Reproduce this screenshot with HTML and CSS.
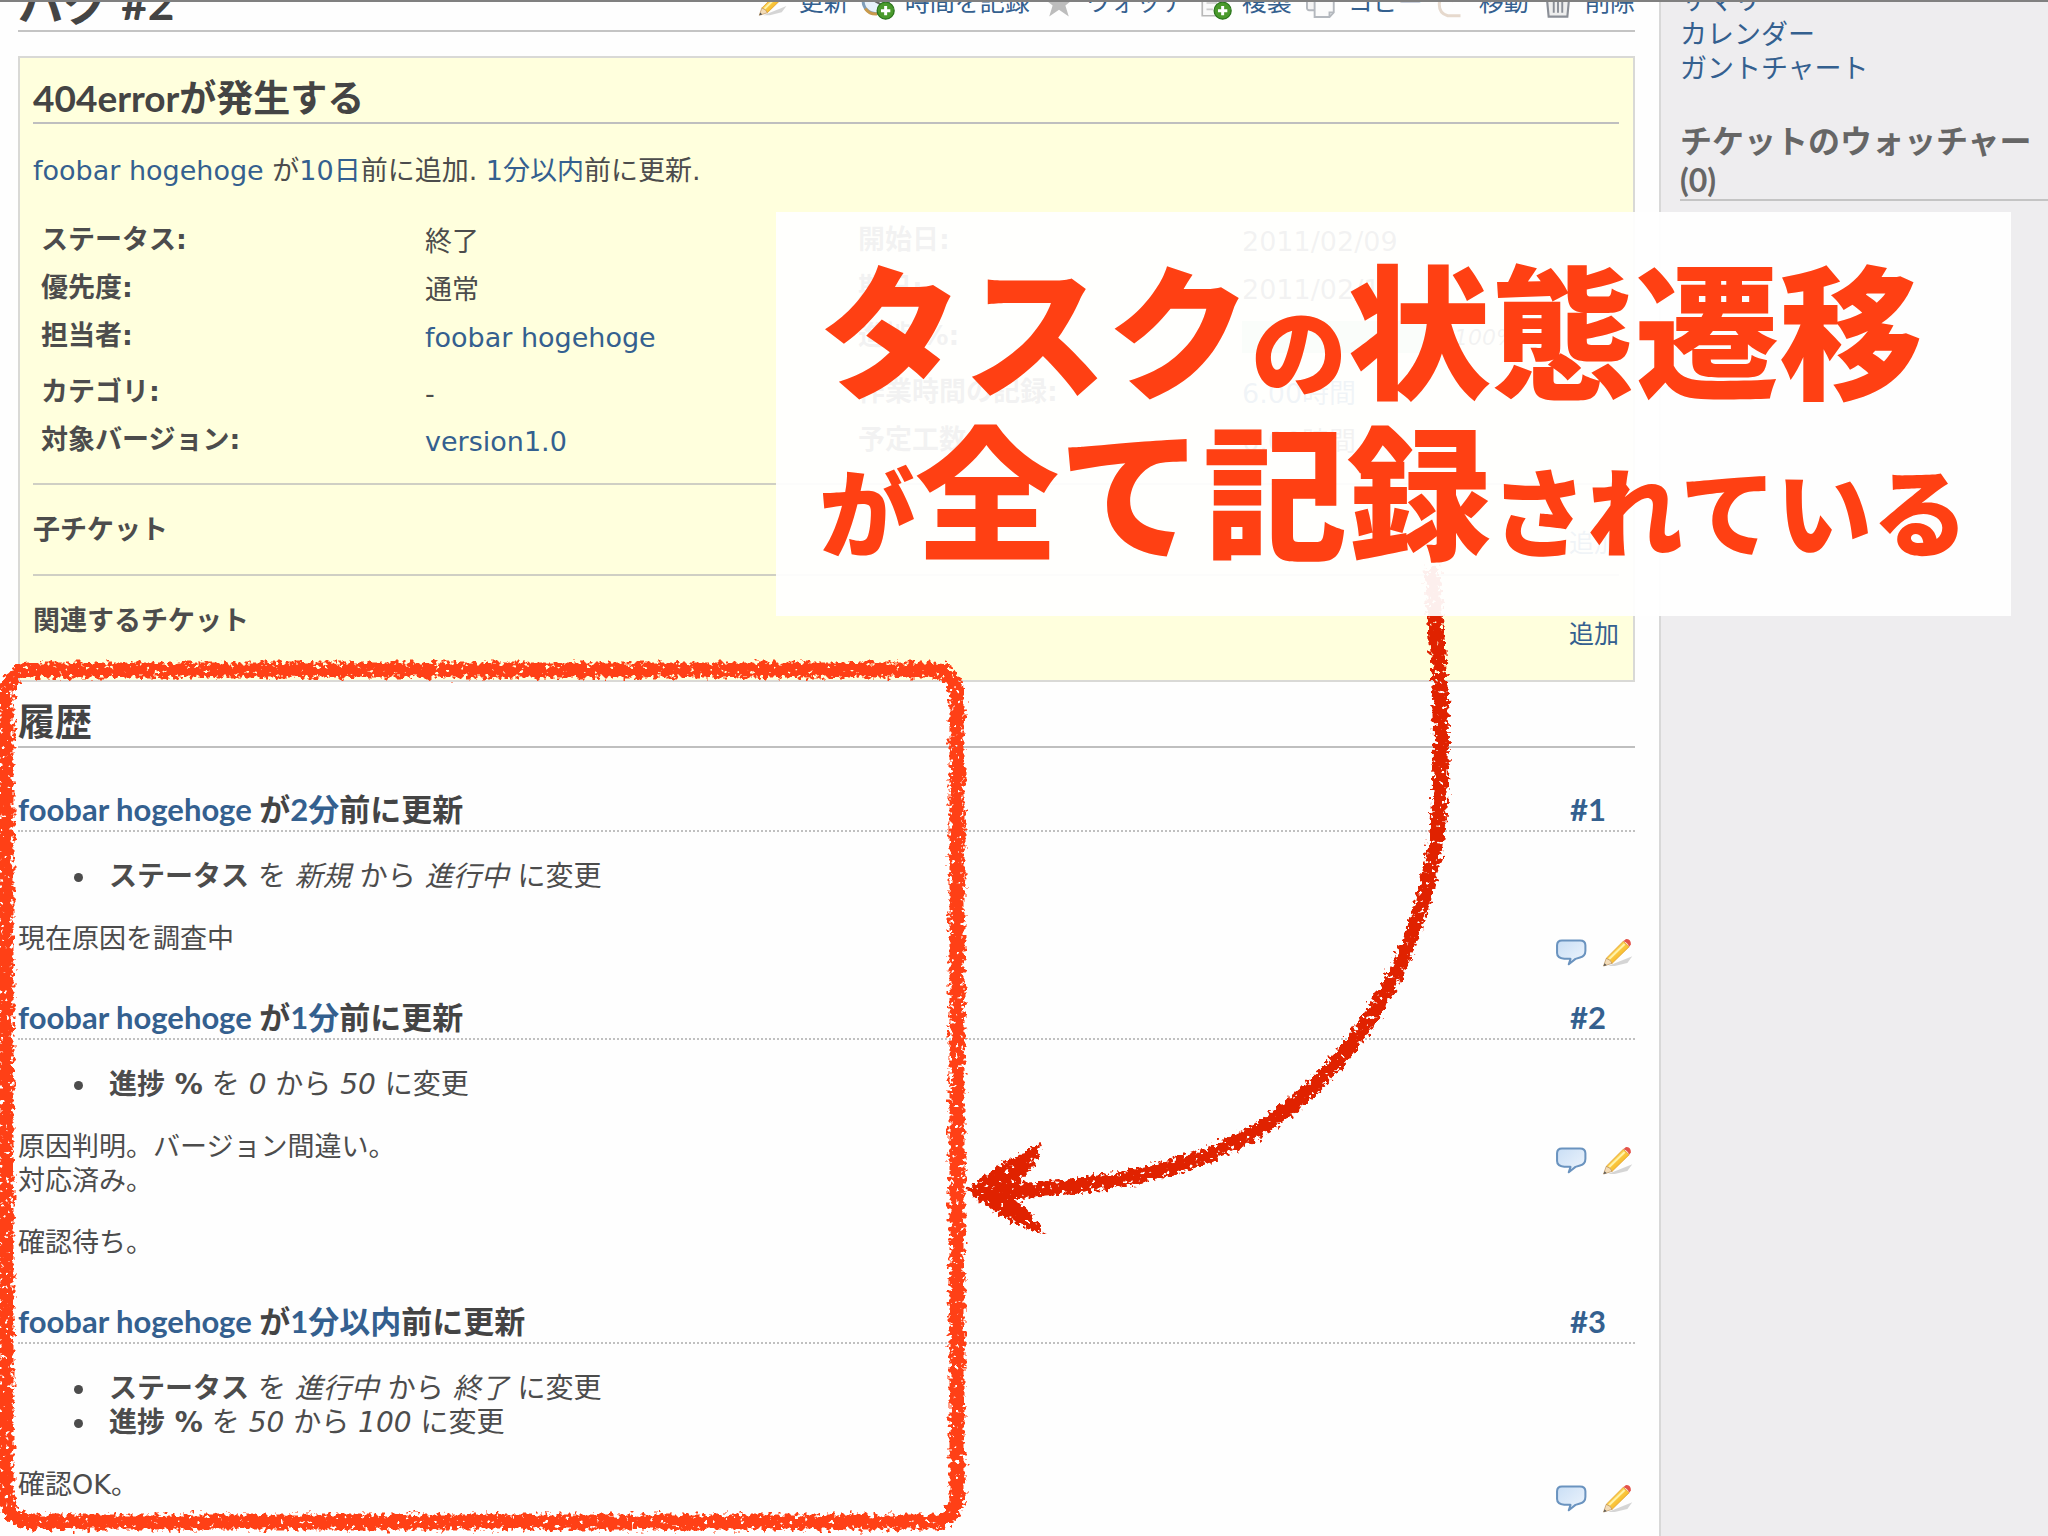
FILE: index.html
```html
<!DOCTYPE html>
<html lang="ja">
    <head>
        <meta charset="UTF-8">
        <title>バグ #2</title>
        <link rel="stylesheet" href="styles.css">
    </head>
    <body>
        <svg class="defs" width="0" height="0" aria-hidden="true">
            <linearGradient id="pen-body" x1="0" y1="0" x2="1" y2="1">
                <stop offset="0" stop-color="#ffe680"/>
                <stop offset="1" stop-color="#f5a800"/>
            </linearGradient>
            <linearGradient id="bubble-fill" x1="0" y1="0" x2="1" y2="1">
                <stop offset="0" stop-color="#c9def5"/>
                <stop offset="1" stop-color="#eef5fd"/>
            </linearGradient>
            <symbol id="pencil" viewBox="0 0 16 16">
                <path d="M4 13.8L14.8 9.4L12.6 12.4L7 13.8z" fill="#000" opacity=".16"/>
                <path d="M3.2 10.4L10.8 2.8L13.4 5.2L5.8 12.6z" fill="url(#pen-body)" stroke="#e3a32c" stroke-width=".4"/>
                <path d="M4.4 10.8L11.4 4" stroke="#fff3a8" stroke-width=".9"/>
                <path d="M10.8 2.8L12 1.8Q14.2 1.8 14.2 4.2L13.4 5.2Q12.8 3.4 10.8 2.8z" fill="#e4534a"/>
                <path d="M3.2 10.4L2 13.8L5.8 12.6Q5.2 10.8 3.2 10.4z" fill="#f3dcb8" stroke="#b98d55" stroke-width=".3"/>
                <path d="M2.5 12.5L2 13.8L3.4 13.4z" fill="#555"/>
            </symbol>
            <symbol id="bubble" viewBox="0 0 16 16">
                <path d="M4 2.4H12Q14.4 2.4 14.4 4.6V7Q14.4 9.4 12 10L10 10.6L7 13L7.8 10.6H5Q1.8 10.2 1.8 8V4.6Q1.8 2.4 4 2.4z" fill="url(#bubble-fill)" stroke="#6a93bf" stroke-width=".9" stroke-linejoin="round"/>
            </symbol>
            <symbol id="plus" viewBox="0 0 16 16">
                <circle cx="11.6" cy="11.6" r="4" fill="#4a9a2c" stroke="#2a741b" stroke-width=".6"/>
                <path d="M11.6 9.4V13.8M9.4 11.6H13.8" stroke="#fff" stroke-width="1.4"/>
            </symbol>
            <symbol id="clock" viewBox="0 0 16 16">
                <circle cx="7" cy="7" r="6" fill="#e8f1fa" stroke="#7f9db9" stroke-width="1.4"/>
                <path d="M2 10.6Q4 13.4 7.6 13.2" fill="none" stroke="#c99a4c" stroke-width="1.4"/>
                <path d="M7 3V7.4L10 9" fill="none" stroke="#666" stroke-width="1"/>
                <use href="#plus"/>
            </symbol>
            <symbol id="star" viewBox="0 0 16 16">
                <path d="M8 1L10 6H15L11 9.2L12.6 14.4L8 11.2L3.4 14.4L5 9.2L1 6H6z" fill="#bdbdbd"/>
            </symbol>
            <symbol id="duplicate" viewBox="0 0 16 16">
                <path d="M2 1H12V14H2z" fill="#fafafa" stroke="#b8b8b8" stroke-width=".8"/>
                <path d="M4 5H10M4 8H9M4 11H7" stroke="#ccc" stroke-width=".8"/>
                <use href="#plus"/>
            </symbol>
            <symbol id="copy" viewBox="0 0 16 16">
                <rect x="1.4" y="1.4" width="9" height="10" rx="1" fill="#f4f4f4" stroke="#b4b8be" stroke-width=".9"/>
                <path d="M5 4.4H14V12.4L12 14.6H5z" fill="#fbfbfb" stroke="#b4b8be" stroke-width=".9"/>
                <path d="M14 12.4H12V14.6" fill="none" stroke="#b4b8be" stroke-width=".9"/>
            </symbol>
            <symbol id="move" viewBox="0 0 16 16">
                <path d="M12 14H6Q2 13 2 8.6Q2 4 8 4" fill="none" stroke="#e6d9cd" stroke-width="1.4"/>
                <path d="M8 1L13 4.4L8 7.6z" fill="#d99c7b"/>
            </symbol>
            <symbol id="trash" viewBox="0 0 16 16">
                <path d="M2.6 4H13.4L12.4 14.4H3.6z" fill="#eee" stroke="#8b8f97" stroke-width="1"/>
                <path d="M6 6V12.6M8 6V12.6M10 6V12.6" stroke="#8b8f97" stroke-width=".9"/>
                <path d="M1.6 3.4H14.4" stroke="#8b8f97" stroke-width="1.4"/>
            </symbol>
        </svg>

        <div class="wrapper">
            <main class="content">
                <header class="page-head">
                    <h2>バグ #2</h2>
                    <nav class="contextual">
                        <a href="#"><svg class="icon"><use href="#pencil"/></svg>更新</a>
                        <a href="#"><svg class="icon"><use href="#clock"/></svg>時間を記録</a>
                        <a href="#"><svg class="icon"><use href="#star"/></svg>ウォッチ</a>
                        <a href="#"><svg class="icon"><use href="#duplicate"/></svg>複製</a>
                        <a href="#"><svg class="icon"><use href="#copy"/></svg>コピー</a>
                        <a href="#"><svg class="icon"><use href="#move"/></svg>移動</a>
                        <a href="#"><svg class="icon"><use href="#trash"/></svg>削除</a>
                    </nav>
                </header>

                <section class="issue">
                    <h3>404errorが発生する</h3>
                    <p class="author"><a href="#">foobar hogehoge</a> が<a href="#">10日</a>前に追加. <a href="#">1分以内</a>前に更新.</p>
                    <table class="attributes">
                        <tr>
                            <th class="label">ステータス:</th>
                            <td class="value">終了</td>
                            <th class="label">開始日:</th>
                            <td>2011/02/09</td>
                        </tr>
                        <tr>
                            <th>優先度:</th>
                            <td>通常</td>
                            <th>期日:</th>
                            <td>2011/02/11</td>
                        </tr>
                        <tr>
                            <th>担当者:</th>
                            <td><a href="#">foobar hogehoge</a></td>
                            <th>進捗 %:</th>
                            <td><div class="progress"><span class="bar"></span><span class="pourcent">100%</span></div></td>
                        </tr>
                        <tr>
                            <th>カテゴリ:</th>
                            <td>-</td>
                            <th>作業時間の記録:</th>
                            <td><a href="#">6.00時間</a></td>
                        </tr>
                        <tr>
                            <th>対象バージョン:</th>
                            <td><a href="#">version1.0</a></td>
                            <th>予定工数:</th>
                            <td>6.00時間</td>
                        </tr>
                    </table>
                    <div class="related">
                        <strong>子チケット</strong>
                        <a href="#">追加</a>
                    </div>
                    <div class="related">
                        <strong>関連するチケット</strong>
                        <a href="#">追加</a>
                    </div>
                </section>

                <section class="history">
                    <h3>履歴</h3>
                    <article class="journal">
                        <h4><span><a href="#">foobar hogehoge</a> が<a href="#">2分</a>前に更新</span><a class="number" href="#">#1</a></h4>
                        <ul>
                            <li><strong>ステータス</strong> を <i>新規</i> から <i>進行中</i> に変更</li>
                        </ul>
                        <div class="notes">
                            <div class="text">
                                <p>現在原因を調査中</p>
                            </div>
                            <a href="#" aria-label="引用"><svg class="tool"><use href="#bubble"/></svg></a>
                            <a href="#" aria-label="編集"><svg class="tool"><use href="#pencil"/></svg></a>
                        </div>
                    </article>
                    <article class="journal">
                        <h4><span><a href="#">foobar hogehoge</a> が<a href="#">1分</a>前に更新</span><a class="number" href="#">#2</a></h4>
                        <ul>
                            <li><strong>進捗 %</strong> を <i>0</i> から <i>50</i> に変更</li>
                        </ul>
                        <div class="notes">
                            <div class="text">
                                <p>原因判明。バージョン間違い。<br>対応済み。</p>
                                <p>確認待ち。</p>
                            </div>
                            <a href="#" aria-label="引用"><svg class="tool"><use href="#bubble"/></svg></a>
                            <a href="#" aria-label="編集"><svg class="tool"><use href="#pencil"/></svg></a>
                        </div>
                    </article>
                    <article class="journal">
                        <h4><span><a href="#">foobar hogehoge</a> が<a href="#">1分以内</a>前に更新</span><a class="number" href="#">#3</a></h4>
                        <ul>
                            <li><strong>ステータス</strong> を <i>進行中</i> から <i>終了</i> に変更</li>
                            <li><strong>進捗 %</strong> を <i>50</i> から <i>100</i> に変更</li>
                        </ul>
                        <div class="notes">
                            <div class="text">
                                <p>確認OK。</p>
                            </div>
                            <a href="#" aria-label="引用"><svg class="tool"><use href="#bubble"/></svg></a>
                            <a href="#" aria-label="編集"><svg class="tool"><use href="#pencil"/></svg></a>
                        </div>
                    </article>
                </section>
            </main>

            <aside class="sidebar">
                <nav>
                    <a href="#">サマリー</a>
                    <a href="#">カレンダー</a>
                    <a href="#">ガントチャート</a>
                </nav>
                <h3>チケットのウォッチャー (0)</h3>
            </aside>
        </div>

        <!-- crayon frame and arrow -->
        <svg class="marks" viewBox="0 0 2048 1536" aria-hidden="true">
            <filter id="crayon" filterUnits="userSpaceOnUse" x="-20" y="540" width="1500" height="1020">
                <feTurbulence type="fractalNoise" baseFrequency=".22" numOctaves="2" seed="4" result="noise"/>
                <feDisplacementMap in="SourceGraphic" in2="noise" scale="13" xChannelSelector="R" yChannelSelector="G" result="rough"/>
                <feTurbulence type="fractalNoise" baseFrequency=".2" numOctaves="2" seed="11"/>
                <feColorMatrix values="0 0 0 0 0  0 0 0 0 0  0 0 0 0 0  14 0 0 0 -9.6" result="holes"/>
                <feComposite in="rough" in2="holes" operator="out"/>
            </filter>
            <g filter="url(#crayon)">
                <rect x="6" y="670" width="951" height="852" rx="24" fill="none" stroke="#ff4013" stroke-width="15"/>
                <path d="M1432 568C1436 640 1446 710 1439 810C1431 930 1370 1060 1255 1132C1180 1176 1080 1190 1000 1191" fill="none" stroke="#e02200" stroke-width="15"/>
                <path d="M967 1190L1002 1164L1042 1143L1034 1164L1018 1182V1201L1032 1214L1044 1234L1016 1224L986 1206z" fill="#e02200"/>
            </g>
        </svg>

        <div class="caption">
            <p>タスク<small>の</small>状態遷移</p>
            <p><small>が</small>全て記録<small>されている</small></p>
        </div>
        <div class="topline"></div>
    </body>
</html>
```

FILE: styles.css
```css
*{
    margin:0;
    padding:0;
    box-sizing:border-box;
}
body{
    position:relative;
    overflow:hidden;
    background-color:#fefefe;
    color:#4c4c4c;
    font-family:"DejaVu Sans","Noto Sans CJK JP",sans-serif;
    font-size:27px;
    line-height:34px;
}
a{
    color:#34608f;
    text-decoration:none;
}
h2,h3,h4{
    font-family:Lato,"Noto Sans CJK JP",sans-serif;
    color:#444;
}
.defs{
    position:absolute;
}
.wrapper{
    display:flex;
    min-height:100vh;
}
.topline{
    position:absolute;
    top:0;
    left:0;
    right:0;
    height:2px;
    background-color:#808080;
}
.content{
    flex:1;
    min-width:0;
    padding:0 24px 0 18px;
}

/* the heading row is scrolled partly out of the window */
.page-head{
    display:flex;
    justify-content:space-between;
    align-items:center;
    margin-top:-24px;
    border-bottom:2px solid #c4c4c4;
}
.page-head h2{
    font-size:46px;
    line-height:54px;
}
.contextual{
    display:flex;
    gap:12px;
    font-size:25px;
}
.contextual a{
    display:flex;
    gap:10px;
}
.icon{
    width:34px;
    height:34px;
}

.issue{
    margin-top:24px;
    padding:16px 14px 0 13px;
    background-color:#ffffdd;
    border:2px solid #d9d9d6;
}
.issue h3,
.history h3{
    font-size:37px;
    line-height:48px;
    border-bottom:2px solid #bfbfbf;
}
.author{
    margin:30px 0 28px;
}
.attributes{
    width:100%;
    table-layout:fixed;
    border-collapse:collapse;
}
.attributes th,
.attributes td{
    padding:7px 8px;
    text-align:left;
    vertical-align:top;
}
.attributes td{
    padding:9px 8px 5px;
}
.attributes .label{
    width:384px;
}
.attributes .value{
    width:433px;
}
.progress{
    display:flex;
    gap:24px;
    height:42px;
    font-size:22px;
    font-style:italic;
}
.bar{
    width:188px;
    height:32px;
    background-color:#bae0ba;
}
.related{
    display:flex;
    justify-content:space-between;
    height:91px;
    padding-top:28px;
    border-top:2px solid #cfcfc4;
}
.attributes + .related{
    margin-top:19px;
}
.related:last-child{
    height:106px;
}
.related a{
    margin-top:14px;
    font-size:25px;
}

.history h3{
    margin-top:16px;
    margin-bottom:40px;
}
.journal{
    margin-bottom:40px;
}
.journal h4{
    display:flex;
    justify-content:space-between;
    padding-right:29px;
    border-bottom:2px dotted #c0c0c0;
    font-size:31px;
    line-height:42px;
}
.journal ul{
    margin:28px 0;
    padding-left:80px;
    font-size:28px;
}
.journal li{
    padding-left:11px;
}
.notes{
    display:flex;
    gap:10px;
}
.text{
    flex:1;
}
.text p + p{
    margin-top:28px;
}
/* the buttons hang below a one-line note */
.tool{
    display:block;
    width:36px;
    height:36px;
    margin:13px 0 -15px;
}

.sidebar{
    flex:0 0 19%;
    padding-left:19px;
    background-color:#eeedef;
    border-left:2px solid #d8d8d8;
}
.sidebar nav{
    display:flex;
    flex-direction:column;
    margin-top:-16px;
}
.sidebar h3{
    margin-top:35px;
    border-bottom:2px solid #c4c4c4;
    color:#666;
    font-size:32px;
    line-height:39px;
}

.marks{
    position:absolute;
    top:0;
    left:0;
    width:100%;
}
.caption{
    position:absolute;
    top:212px;
    left:776px;
    padding:33px 43px 49px 43px;
    background-color:rgba(255,255,255,.93);
    color:#ff4013;
    font-family:"Noto Sans CJK JP",sans-serif;
    font-size:144px;
    font-weight:900;
    line-height:161px;
    white-space:nowrap;
}
.caption small{
    font-size:96px;
    line-height:96px;
}
```
